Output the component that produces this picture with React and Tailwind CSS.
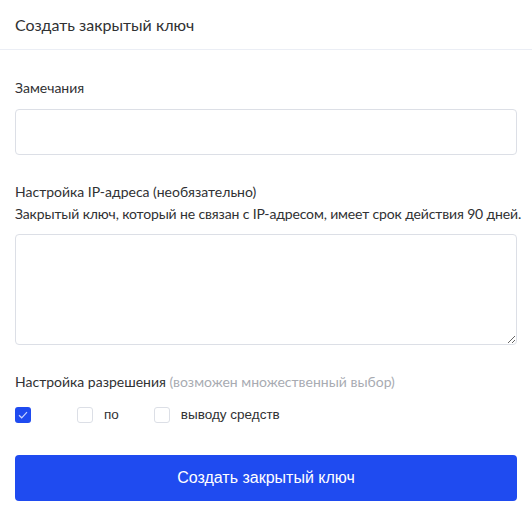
import { useState } from 'react'

const PERMS = [
  { id: 'read', label: '' },
  { id: 'trade', label: 'по' },
  { id: 'withdraw', label: 'выводу средств' },
]

function Check({ checked, label, onToggle }) {
  return (
    <label className="flex items-center cursor-pointer mr-[35px]" onClick={onToggle}>
      <span
        className={
          checked
            ? 'w-[16px] h-[16px] rounded-[3px] bg-[#1f4bf0] flex items-center justify-center'
            : 'w-[16px] h-[16px] rounded-[3px] border border-[#dcdfe6] bg-white'
        }
      >
        {checked ? (
          <svg width="10" height="8" viewBox="0 0 10 8" fill="none">
            <path d="M1 4.2 3.7 6.8 9 1.2" stroke="#c9d4ff" strokeWidth="1.2" />
          </svg>
        ) : null}
      </span>
      <span className="ml-[11px] text-[13.5px] text-[#303133] font-['Liberation_Sans',Arial,sans-serif]">{label}</span>
    </label>
  )
}

export default function App() {
  const [note, setNote] = useState('')
  const [ips, setIps] = useState('')
  const [perms, setPerms] = useState({ read: true, trade: false, withdraw: false })

  const toggle = id => setPerms(p => ({ ...p, [id]: !p[id] }))

  return (
    <div className="w-[532px] min-h-[515px] bg-white font-['Lato',sans-serif] text-[#303133]">
      <div className="h-[50px] px-[15px] flex items-center border-b border-[#ebeef5]">
        <span className="text-[16px]">Создать закрытый ключ</span>
      </div>

      <div className="px-[15px] pt-[27px]">
        <div className="text-[14px] leading-[22px] mb-[10px]">Замечания</div>
        <input
          type="text"
          value={note}
          onChange={e => setNote(e.target.value)}
          className="block w-full h-[46px] px-[12px] rounded-[4px] border border-[#dcdfe6] outline-none text-[14px]"
        />

        <div className="mt-[26px] text-[14px] leading-[22px]">Настройка IP-адреса (необязательно)</div>
        <div className="text-[14px] leading-[22px] mb-[9px] whitespace-nowrap tracking-[-0.14px]">
          Закрытый ключ, который не связан с IP-адресом, имеет срок действия 90 дней.
        </div>
        <textarea
          value={ips}
          onChange={e => setIps(e.target.value)}
          className="block w-full h-[111px] px-[12px] py-[8px] rounded-[4px] border border-[#dcdfe6] outline-none text-[14px]"
        />

        <div className="mt-[26px] text-[14px] leading-[22px]">
          Настройка разрешения <span className="text-[#a8abb2]">(возможен множественный выбор)</span>
        </div>
        <div className="mt-[14px] flex items-center h-[16px]">
          {PERMS.map(p => (
            <Check key={p.id} checked={perms[p.id]} label={p.label} onToggle={() => toggle(p.id)} />
          ))}
        </div>

        <button
          type="button"
          className="mt-[32px] w-full h-[46px] rounded-[4px] bg-[#1f4bf0] text-white text-[16px] font-['Liberation_Sans',Arial,sans-serif]"
        >
          Создать закрытый ключ
        </button>
      </div>
    </div>
  )
}
